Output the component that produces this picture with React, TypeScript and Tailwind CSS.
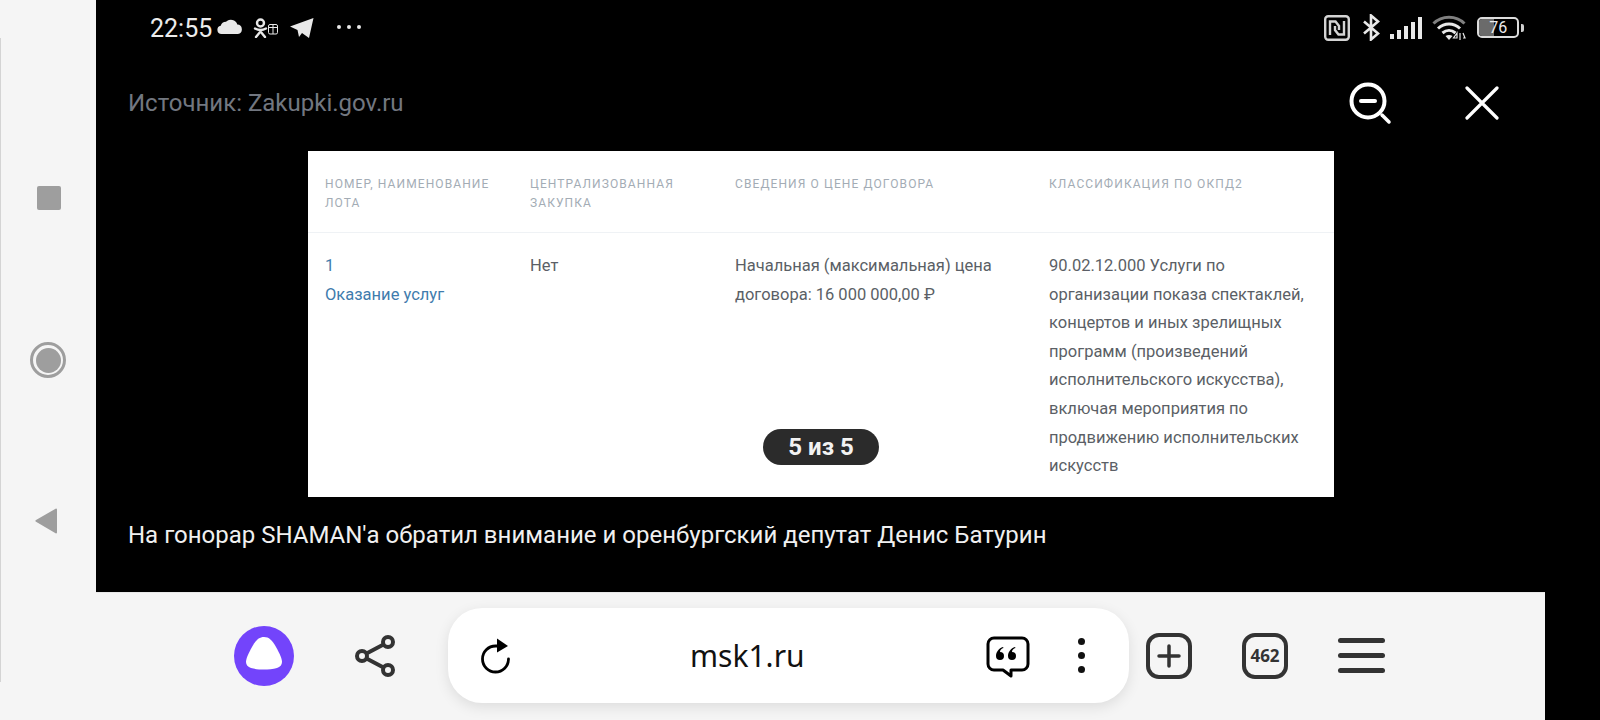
const roboto = "font-['Roboto',sans-serif]"

function RailIcons() {
  return (
    <div className="flex flex-col w-[95px] pl-[35px] pt-[186px]">
      <div className="w-[24px] h-[24px] ml-[1px] rounded-[2px] bg-[#9e9e9e]" />
      <div className="w-[36px] h-[36px] -ml-[6px] mt-[132px] rounded-full border-[3px] border-[#9e9e9e] flex items-center justify-center">
        <div className="w-[25px] h-[25px] rounded-full bg-[#9e9e9e]" />
      </div>
      <svg width="24" height="28" viewBox="0 0 24 28" className="-ml-[2px] mt-[129px]">
        <path d="M22 1.500 L2 13 a1 1 0 0 0 0 1.800 L22 26.500 a1 1 0 0 0 1 -1 V2.500 a1 1 0 0 0 -1 -1z" fill="#9e9e9e" />
      </svg>
    </div>
  )
}

function StatusBar() {
  return (
    <div className="h-[56px] flex items-center text-[#ececec]">
      <span className={`ml-[54px] text-[25px] leading-none ${roboto}`}>22:55</span>
      {/* cloud */}
      <svg width="25" height="15" viewBox="0 0 25 15" className="ml-[5px] -mt-[3px]">
        <path d="M4.500 15a4.200 4.200 0 0 1-.8-8.300A5.500 5.500 0 0 1 9 2.800 A6.800 6.800 0 0 1 20.300 5.500a4.800 4.800 0 0 1 .7 9.500z" fill="#e8e8e8" />
      </svg>
      {/* ok.ru + gift */}
      <svg width="26" height="20" viewBox="0 0 26 20" className="ml-[11px] -mt-[1px]" fill="none" stroke="#e8e8e8">
        <circle cx="7.500" cy="5" r="3.500" strokeWidth="2.400" />
        <path d="M2 10.500c3.500 2 7.500 2 11 0M7.500 12v2M7.500 13.500L3 19M7.500 13.500L12 19" strokeWidth="2.400" strokeLinecap="round" />
        <rect x="15.500" y="6.500" width="9" height="9.500" rx="1.500" strokeWidth="1" />
        <path d="M20 6.500v9.500M15.500 9.500h9" strokeWidth="1" />
      </svg>
      {/* telegram */}
      <svg width="25" height="22" viewBox="0 0 25 22" className="ml-[10px] -mt-[1px]">
        <path d="M24.500 1 L20 21 L13 16 L10 20 L8.500 13 L1 9.500z" fill="#e8e8e8" />
      </svg>
      <div className="flex gap-[6px] ml-[23px] -mt-[2px]">
        <div className="w-[4px] h-[4px] rounded-full bg-[#e8e8e8]" />
        <div className="w-[4px] h-[4px] rounded-full bg-[#e8e8e8]" />
        <div className="w-[4px] h-[4px] rounded-full bg-[#e8e8e8]" />
      </div>
      {/* nfc */}
      <svg width="26" height="26" viewBox="0 0 26 26" className="ml-[963px] -mt-[1px]" fill="none" stroke="#d4d4d4" strokeWidth="2.400">
        <rect x="1.200" y="1.200" width="23.600" height="23.600" rx="3" />
        <path d="M6 20V6.500h5.500L15 11v4M20 6v13.500h-5.500L11 15v-4" />
      </svg>
      {/* bluetooth */}
      <svg width="18" height="27" viewBox="0 0 18 27" className="ml-[12px] -mt-[1px]" fill="none" stroke="#e8e8e8" strokeWidth="2.600">
        <path d="M2 7.500l14 12L9 25.500V1.500l7 6L2 19.500" />
      </svg>
      {/* signal */}
      <div className="flex items-end gap-[3px] h-[22px] ml-[10px] -mt-[1px]">
        <div className="w-[4px] h-[5px] bg-[#e8e8e8]" />
        <div className="w-[4px] h-[9px] bg-[#e8e8e8]" />
        <div className="w-[4px] h-[13px] bg-[#e8e8e8]" />
        <div className="w-[4px] h-[17px] bg-[#e8e8e8]" />
        <div className="w-[4px] h-[22px] bg-[#e8e8e8]" />
      </div>
      {/* wifi */}
      <svg width="34" height="27" viewBox="0 0 34 27" className="ml-[10px] -mt-[1px]" fill="none">
        <path d="M1.500 9.500C10 1 24 1 32.500 9.500" stroke="#808080" strokeWidth="3" />
        <path d="M6 14.500c6.500-6 15.500-6 22 0" stroke="#e8e8e8" strokeWidth="3" />
        <path d="M10.500 19c4-3.500 9-3.500 13 0" stroke="#e8e8e8" strokeWidth="3" />
        <path d="M13.500 22l3.500 4 3.500-4c-2-1.500-5-1.500-7 0z" fill="#e8e8e8" />
        <path d="M25 19l-3.500 5h3.500zM28 19v7M31 19l2 5h-2" stroke="#e8e8e8" strokeWidth="1.200" />
      </svg>
      {/* battery */}
      <div className="flex items-center ml-[11px] -mt-[1px]">
        <div className="relative w-[42px] h-[21px] rounded-[5px] border-2 border-[#dcdcdc] overflow-hidden">
          <div className="w-[15px] h-full bg-[#6b6b6b]" />
          <span className={`absolute inset-0 flex items-center justify-center text-[16px] leading-none text-[#ececec] ${roboto}`}>76</span>
        </div>
        <div className="w-[3px] h-[8px] ml-[2px] rounded-r-[2px] bg-[#cfcfcf]" />
      </div>
    </div>
  )
}

function GalleryHeader() {
  return (
    <div className="h-[95px] flex items-center pl-[32px]">
      <span className={`text-[24px] leading-none text-[#727780] -mt-[2px] ${roboto}`}>Источник: Zakupki.gov.ru</span>
      <div className="ml-auto flex items-center mr-[46px] -mt-[2px]">
        {/* zoom out */}
        <svg width="44" height="44" viewBox="0 0 44 44" fill="none" stroke="#fff" strokeWidth="4" strokeLinecap="round">
          <circle cx="20" cy="20" r="16.500" />
          <path d="M34 34l7 7" strokeWidth="3.500" />
          <path d="M13 20h14" strokeWidth="4" />
        </svg>
        {/* close */}
        <svg width="34" height="34" viewBox="0 0 34 34" className="ml-[73px]" fill="none" stroke="#fff" strokeWidth="3.200" strokeLinecap="round">
          <path d="M2 2l30 30M32 2L2 32" />
        </svg>
      </div>
    </div>
  )
}

function TableShot() {
  const head = "text-[12px] leading-[19px] tracking-[1.100px] uppercase text-[#a3acb5]"
  const cell = "text-[16.500px] leading-[28.600px] text-[#5b5f66]"
  const link = "text-[16.500px] leading-[28.600px] text-[#3f7cad]"
  return (
    <div className={`relative w-[1026px] h-[346px] ml-[212px] bg-white ${roboto}`}>
      <div className="grid grid-cols-[205px_205px_314px_1fr] h-[82px] pl-[17px] pt-[24px] border-b border-[#eff2f5]">
        <div className={head}>Номер, наименование<br />лота</div>
        <div className={head}>Централизованная<br />закупка</div>
        <div className={head}>Сведения о цене договора</div>
        <div className={head}>Классификация по ОКПД2</div>
      </div>
      <div className="grid grid-cols-[205px_205px_314px_1fr] pl-[17px] pt-[19px]">
        <div className={link}>1<br />Оказание услуг</div>
        <div className={cell}>Нет</div>
        <div className={cell}>Начальная (максимальная) цена<br />договора: 16 000 000,00 ₽</div>
        <div className={cell}>
          90.02.12.000 Услуги по<br />
          организации показа спектаклей,<br />
          концертов и иных зрелищных<br />
          программ (произведений<br />
          исполнительского искусства),<br />
          включая мероприятия по<br />
          продвижению исполнительских<br />
          искусств
        </div>
      </div>
      <div className="absolute left-[455px] bottom-[32px] w-[116px] h-[36px] rounded-full bg-[#2b2b2b] flex items-center justify-center text-[24px] font-bold text-[#f2f2f2]">
        5 из 5
      </div>
    </div>
  )
}

function BottomBar() {
  const ink = "#333333"
  return (
    <div className="h-[128px] bg-[#f5f5f5] border-t border-[#e8e8e8] pb-[2px] flex items-center shrink-0">
      {/* alice */}
      <svg width="60" height="60" viewBox="0 0 60 60" className="ml-[138px]">
        <circle cx="30" cy="30" r="30" fill="#7344fb" />
        <path d="M30 11c5 0 8 3 12 10 4 7 6 12 6 15 0 3-2 5-5 6-4 1-9 1.500-13 1.500s-9-.5-13-1.500c-3-1-5-3-5-6 0-3 2-8 6-15 4-7 7-10 12-10z" fill="#fff" />
      </svg>
      {/* share */}
      <svg width="44" height="50" viewBox="0 0 44 50" className="ml-[59px]" fill="none" stroke={ink} strokeWidth="4">
        <circle cx="9" cy="25" r="5" />
        <circle cx="35" cy="11" r="5" />
        <circle cx="35" cy="39" r="5" />
        <path d="M13.500 22.500L30.500 13.500M13.500 27.500L30.500 36.500" />
      </svg>
      {/* address pill */}
      <div className="ml-[51px] w-[681px] h-[95px] rounded-[34px] bg-white shadow-[0_4px_14px_rgba(0,0,0,0.1)] flex items-center">
        <svg width="34" height="38" viewBox="0 0 34 38" className="ml-[31px]" fill="none" stroke="#000" strokeWidth="2.800" strokeLinecap="round">
          <path d="M29.500 22a13 13 0 1 1-13-13h4" />
          <path d="M18 1.500l11 7.500-11 6.500z" fill="#000" stroke="none" />
        </svg>
        <span className="ml-[177px] text-[30px] leading-none text-[#111] font-['Noto_Sans',sans-serif]">msk1.ru</span>
        <svg width="44" height="43" viewBox="0 0 44 43" className="ml-[181px] mt-[4px]">
          <path d="M8 2h28a6 6 0 0 1 6 6v20a6 6 0 0 1-6 6H25v6l-8-6H8a6 6 0 0 1-6-6V8a6 6 0 0 1 6-6z" fill="none" stroke="#000" strokeWidth="3" strokeLinejoin="round" />
          <path d="M17 11c-4 1-7 5-7 9a4 4 0 1 0 4-4c0-2 1.500-3.500 3.500-4zM29 11c-4 1-7 5-7 9a4 4 0 1 0 4-4c0-2 1.500-3.500 3.500-4z" fill="#000" />
        </svg>
        <div className="ml-[48px] flex flex-col gap-[7px]">
          <div className="w-[7px] h-[7px] rounded-full bg-[#111]" />
          <div className="w-[7px] h-[7px] rounded-full bg-[#111]" />
          <div className="w-[7px] h-[7px] rounded-full bg-[#111]" />
        </div>
      </div>
      {/* new tab */}
      <div className="ml-[17px] w-[46px] h-[46px] rounded-[13px] border-[4px] border-[#333] flex items-center justify-center">
        <svg width="24" height="24" viewBox="0 0 24 24" stroke={ink} strokeWidth="3.500" strokeLinecap="round">
          <path d="M12 2v20M2 12h20" />
        </svg>
      </div>
      {/* tabs count */}
      <div className="ml-[50px] w-[46px] h-[46px] rounded-[13px] border-[4px] border-[#333] flex items-center justify-center text-[17px] font-bold text-[#333] font-['Open_Sans',sans-serif]">
        462
      </div>
      {/* menu */}
      <div className="ml-[50px] flex flex-col gap-[10px]">
        <div className="w-[47px] h-[5px] rounded-full bg-[#333]" />
        <div className="w-[47px] h-[5px] rounded-full bg-[#333]" />
        <div className="w-[47px] h-[5px] rounded-full bg-[#333]" />
      </div>
    </div>
  )
}

export default function App() {
  return (
    <div className="w-[1600px] h-[720px] flex bg-black overflow-hidden">
      <div className="w-[96px] bg-[#f5f5f5] flex shrink-0">
        <div className="w-[1px] mt-[38px] mb-[38px] bg-[#d4d4d4]" />
        <RailIcons />
      </div>
      <div className="w-[1449px] flex flex-col shrink-0">
        <div className="flex-1">
          <StatusBar />
          <GalleryHeader />
          <TableShot />
          <div className={`pl-[32px] mt-[24px] text-[24px] leading-[28px] text-[#f0f0f0] ${roboto}`}>
            На гонорар SHAMAN'а обратил внимание и оренбургский депутат Денис Батурин
          </div>
        </div>
        <BottomBar />
      </div>
    </div>
  )
}
